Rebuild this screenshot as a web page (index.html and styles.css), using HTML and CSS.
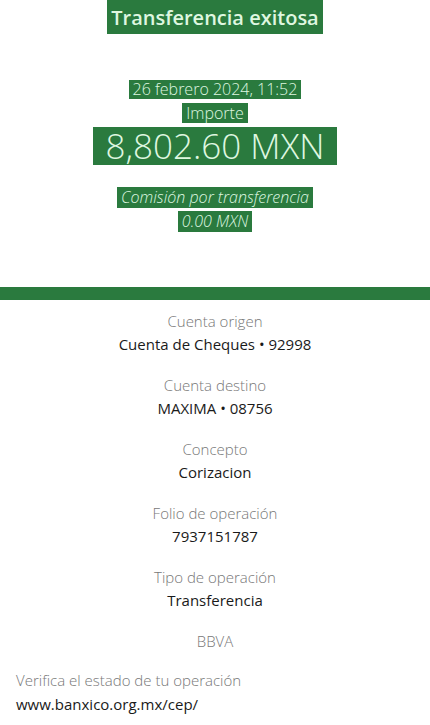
FILE: index.html
```html
<!DOCTYPE html>
<html lang="es">
<head>
  <meta charset="UTF-8">
  <meta name="viewport" content="width=device-width, initial-scale=1.0">
  <title>Transferencia exitosa</title>
  <link rel="stylesheet" href="styles.css">
</head>
<body>
  <div class="header">
    <h1><span class="mark">Transferencia exitosa</span></h1>
    <div class="date"><span class="mark">26 febrero 2024, 11:52</span></div>
    <div class="label-top"><span class="mark">Importe</span></div>
    <div class="amount"><span class="mark">8,802.60 MXN</span></div>
    <div class="fee"><span class="mark">Comisión por transferencia</span></div>
    <div class="fee"><span class="mark">0.00 MXN</span></div>
  </div>
  <div class="band"></div>
  <div class="details">
    <div class="item">
      <div class="label">Cuenta origen</div>
      <div class="value">Cuenta de Cheques • 92998</div>
    </div>
    <div class="item">
      <div class="label">Cuenta destino</div>
      <div class="value">MAXIMA • 08756</div>
    </div>
    <div class="item">
      <div class="label">Concepto</div>
      <div class="value">Corizacion</div>
    </div>
    <div class="item">
      <div class="label">Folio de operación</div>
      <div class="value">7937151787</div>
    </div>
    <div class="item">
      <div class="label">Tipo de operación</div>
      <div class="value">Transferencia</div>
    </div>
    <div class="item">
      <div class="label">BBVA</div>
    </div>
  </div>
  <div class="footer">
    <div class="label">Verifica el estado de tu operación</div>
    <div class="value">www.banxico.org.mx/cep/</div>
  </div>
</body>
</html>
```

FILE: styles.css
```css
body {
  margin: 0;
  font-family: 'Open Sans', sans-serif;
  background: #fff;
  color: #1a1a1a;
}

.header {
  text-align: center;
  height: 287px;
}

.mark {
  display: inline-block;
  background: #2a7a3e;
  color: #dff7e0;
  padding: 0 4px;
}

h1 {
  margin: 0;
  font-size: 20px;
  font-weight: 600;
  line-height: 32px;
}

h1 .mark {
  padding: 2px 4px 0;
}

.date {
  margin-top: 46px;
  font-size: 16px;
  font-weight: 300;
  line-height: 19px;
}

.label-top {
  margin-top: 4px;
  font-size: 16px;
  font-weight: 300;
  line-height: 20px;
}

.amount {
  margin-top: 4px;
  font-size: 35px;
  font-weight: 300;
  line-height: 38px;
}

.amount .mark {
  padding: 0 12px;
}

.fee {
  margin-top: 3px;
  font-size: 16px;
  font-style: italic;
  font-weight: 300;
  line-height: 21px;
}

.amount + .fee {
  margin-top: 22px;
}

.band {
  height: 13px;
  background: #2a7a3e;
}

.details {
  display: flex;
  flex-direction: column;
  gap: 21px;
  padding-top: 11px;
  text-align: center;
}

.item {
  display: flex;
  flex-direction: column;
  gap: 3px;
}

.label {
  font-size: 15px;
  font-weight: 300;
  color: #777;
  line-height: 20px;
}

.value {
  font-size: 15px;
  font-weight: 400;
  color: #1a1a1a;
  line-height: 20px;
}

.footer {
  margin-top: 19px;
  padding: 0 16px;
  display: flex;
  flex-direction: column;
  gap: 4px;
}
```
